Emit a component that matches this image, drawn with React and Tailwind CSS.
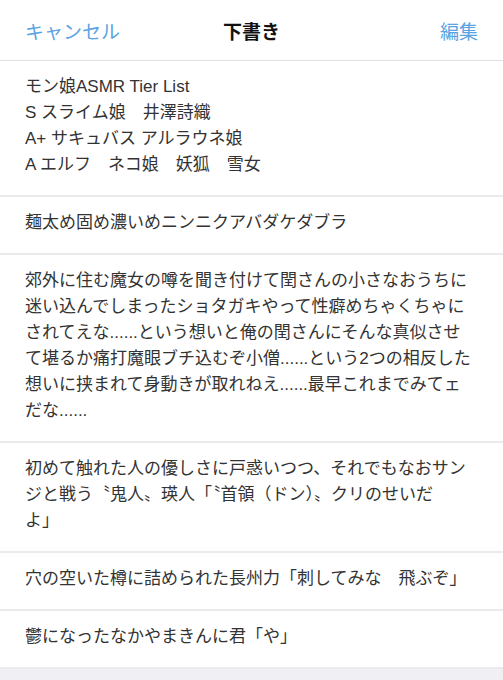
const drafts = [
  ["モン娘ASMR Tier List", "S スライム娘　井澤詩織", "A+ サキュバス アルラウネ娘", "A エルフ　ネコ娘　妖狐　雪女"],
  ["麺太め固め濃いめニンニクアバダケダブラ"],
  [
    "郊外に住む魔女の噂を聞き付けて閏さんの小さなおうちに",
    "迷い込んでしまったショタガキやって性癖めちゃくちゃに",
    "されてえな......という想いと俺の閏さんにそんな真似させ",
    "て堪るか痛打魔眼ブチ込むぞ小僧......という2つの相反した",
    "想いに挟まれて身動きが取れねえ......最早これまでみてェ",
    "だな......",
  ],
  [
    "初めて触れた人の優しさに戸惑いつつ、それでもなおサン",
    "ジと戦う〝鬼人〟瑛人「〝首領（ドン）〟クリのせいだ",
    "よ」",
  ],
  ["穴の空いた樽に詰められた長州力「刺してみな　飛ぶぞ」"],
  ["鬱になったなかやまきんに君「や」"],
]

export default function App() {
  return (
    <div
      className="w-[503px] h-[680px] bg-[#efeff4] overflow-hidden"
      style={{ fontFamily: "'Liberation Sans', 'Noto Sans CJK JP', sans-serif" }}
    >
      {/* Nav bar */}
      <div className="h-[61px] bg-white border-b border-[#e0e0e4] flex items-center justify-between px-[25px] pt-[6px]">
        <span className="text-[19px] text-[#5aa3e2] w-[110px]">キャンセル</span>
        <span className="text-[19px] font-bold text-[#111]">下書き</span>
        <span className="text-[19px] text-[#5aa3e2] w-[110px] text-right">編集</span>
      </div>

      {/* Draft list */}
      {drafts.map((lines, i) => (
        <div
          key={i}
          className="bg-white border-b-2 border-[#ebebee] px-[25px] pt-[13px] pb-[17px] text-[17px] leading-[26px] text-[#333]"
        >
          {lines.map((l, j) => (
            <div key={j} className="whitespace-nowrap">{l}</div>
          ))}
        </div>
      ))}
    </div>
  )
}
